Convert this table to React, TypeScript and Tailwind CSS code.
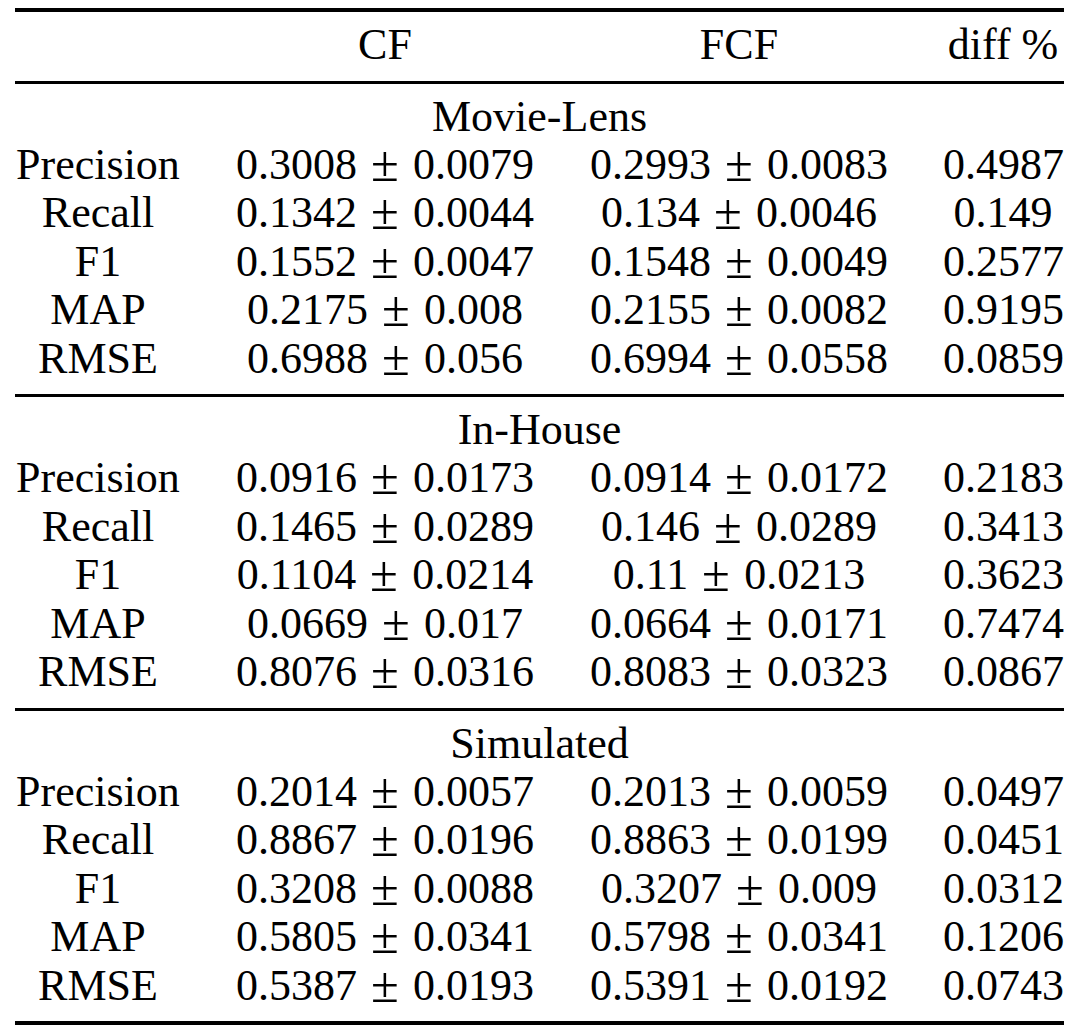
import React from 'react';

type Section = {
  title: string;
  rows: string[][];
};

const sections: Section[] = [
  {
    title: 'Movie-Lens',
    rows: [
      ['Precision', '0.3008|0.0079', '0.2993|0.0083', '0.4987'],
      ['Recall', '0.1342|0.0044', '0.134|0.0046', '0.149'],
      ['F1', '0.1552|0.0047', '0.1548|0.0049', '0.2577'],
      ['MAP', '0.2175|0.008', '0.2155|0.0082', '0.9195'],
      ['RMSE', '0.6988|0.056', '0.6994|0.0558', '0.0859'],
    ],
  },
  {
    title: 'In-House',
    rows: [
      ['Precision', '0.0916|0.0173', '0.0914|0.0172', '0.2183'],
      ['Recall', '0.1465|0.0289', '0.146|0.0289', '0.3413'],
      ['F1', '0.1104|0.0214', '0.11|0.0213', '0.3623'],
      ['MAP', '0.0669|0.017', '0.0664|0.0171', '0.7474'],
      ['RMSE', '0.8076|0.0316', '0.8083|0.0323', '0.0867'],
    ],
  },
  {
    title: 'Simulated',
    rows: [
      ['Precision', '0.2014|0.0057', '0.2013|0.0059', '0.0497'],
      ['Recall', '0.8867|0.0196', '0.8863|0.0199', '0.0451'],
      ['F1', '0.3208|0.0088', '0.3207|0.009', '0.0312'],
      ['MAP', '0.5805|0.0341', '0.5798|0.0341', '0.1206'],
      ['RMSE', '0.5387|0.0193', '0.5391|0.0192', '0.0743'],
    ],
  },
];

const gridCols = 'grid grid-cols-[166px_300px_300px_120px] gap-x-[54px]';

// "mean|std" -> mean ± std, with math-like spacing around the ±
const Cell: React.FC<{ text: string }> = ({ text }) => {
  const parts = text.split('|');
  if (parts.length < 2) return <>{text}</>;
  return (
    <>
      {parts[0]}
      <span className="inline-block w-[56px] text-center scale-[1.15]">±</span>
      {parts[1]}
    </>
  );
};

const Row: React.FC<{ cells: string[] }> = ({ cells }) => (
  <div className={`${gridCols} h-[48.5px] items-center`}>
    {cells.map((c, i) => (
      <div key={i} className="text-center whitespace-nowrap leading-none">
        <Cell text={c} />
      </div>
    ))}
  </div>
);

export default function App() {
  return (
    <div className="w-[1080px] h-[1027px] bg-white text-black font-['Liberation_Serif','Times_New_Roman',serif] text-[44px] overflow-hidden">
      <div className="ml-[15px] w-[1049px] pt-2">
        {/* top rule */}
        <div className="h-[4px] bg-black" />
        <div className="pt-[9px] pb-[11px]">
          <Row cells={['', 'CF', 'FCF', 'diff %']} />
        </div>

        {sections.map((s) => (
          <div key={s.title}>
            <div className="h-[3px] bg-black" />
            <div className="pt-[9px] pb-[11px]">
              <div className="h-[48px] flex items-center justify-center leading-none">{s.title}</div>
              {s.rows.map((r) => (
                <Row key={s.title + r[0]} cells={r} />
              ))}
            </div>
          </div>
        ))}

        {/* bottom rule */}
        <div className="h-[4px] bg-black" />
      </div>
    </div>
  );
}
